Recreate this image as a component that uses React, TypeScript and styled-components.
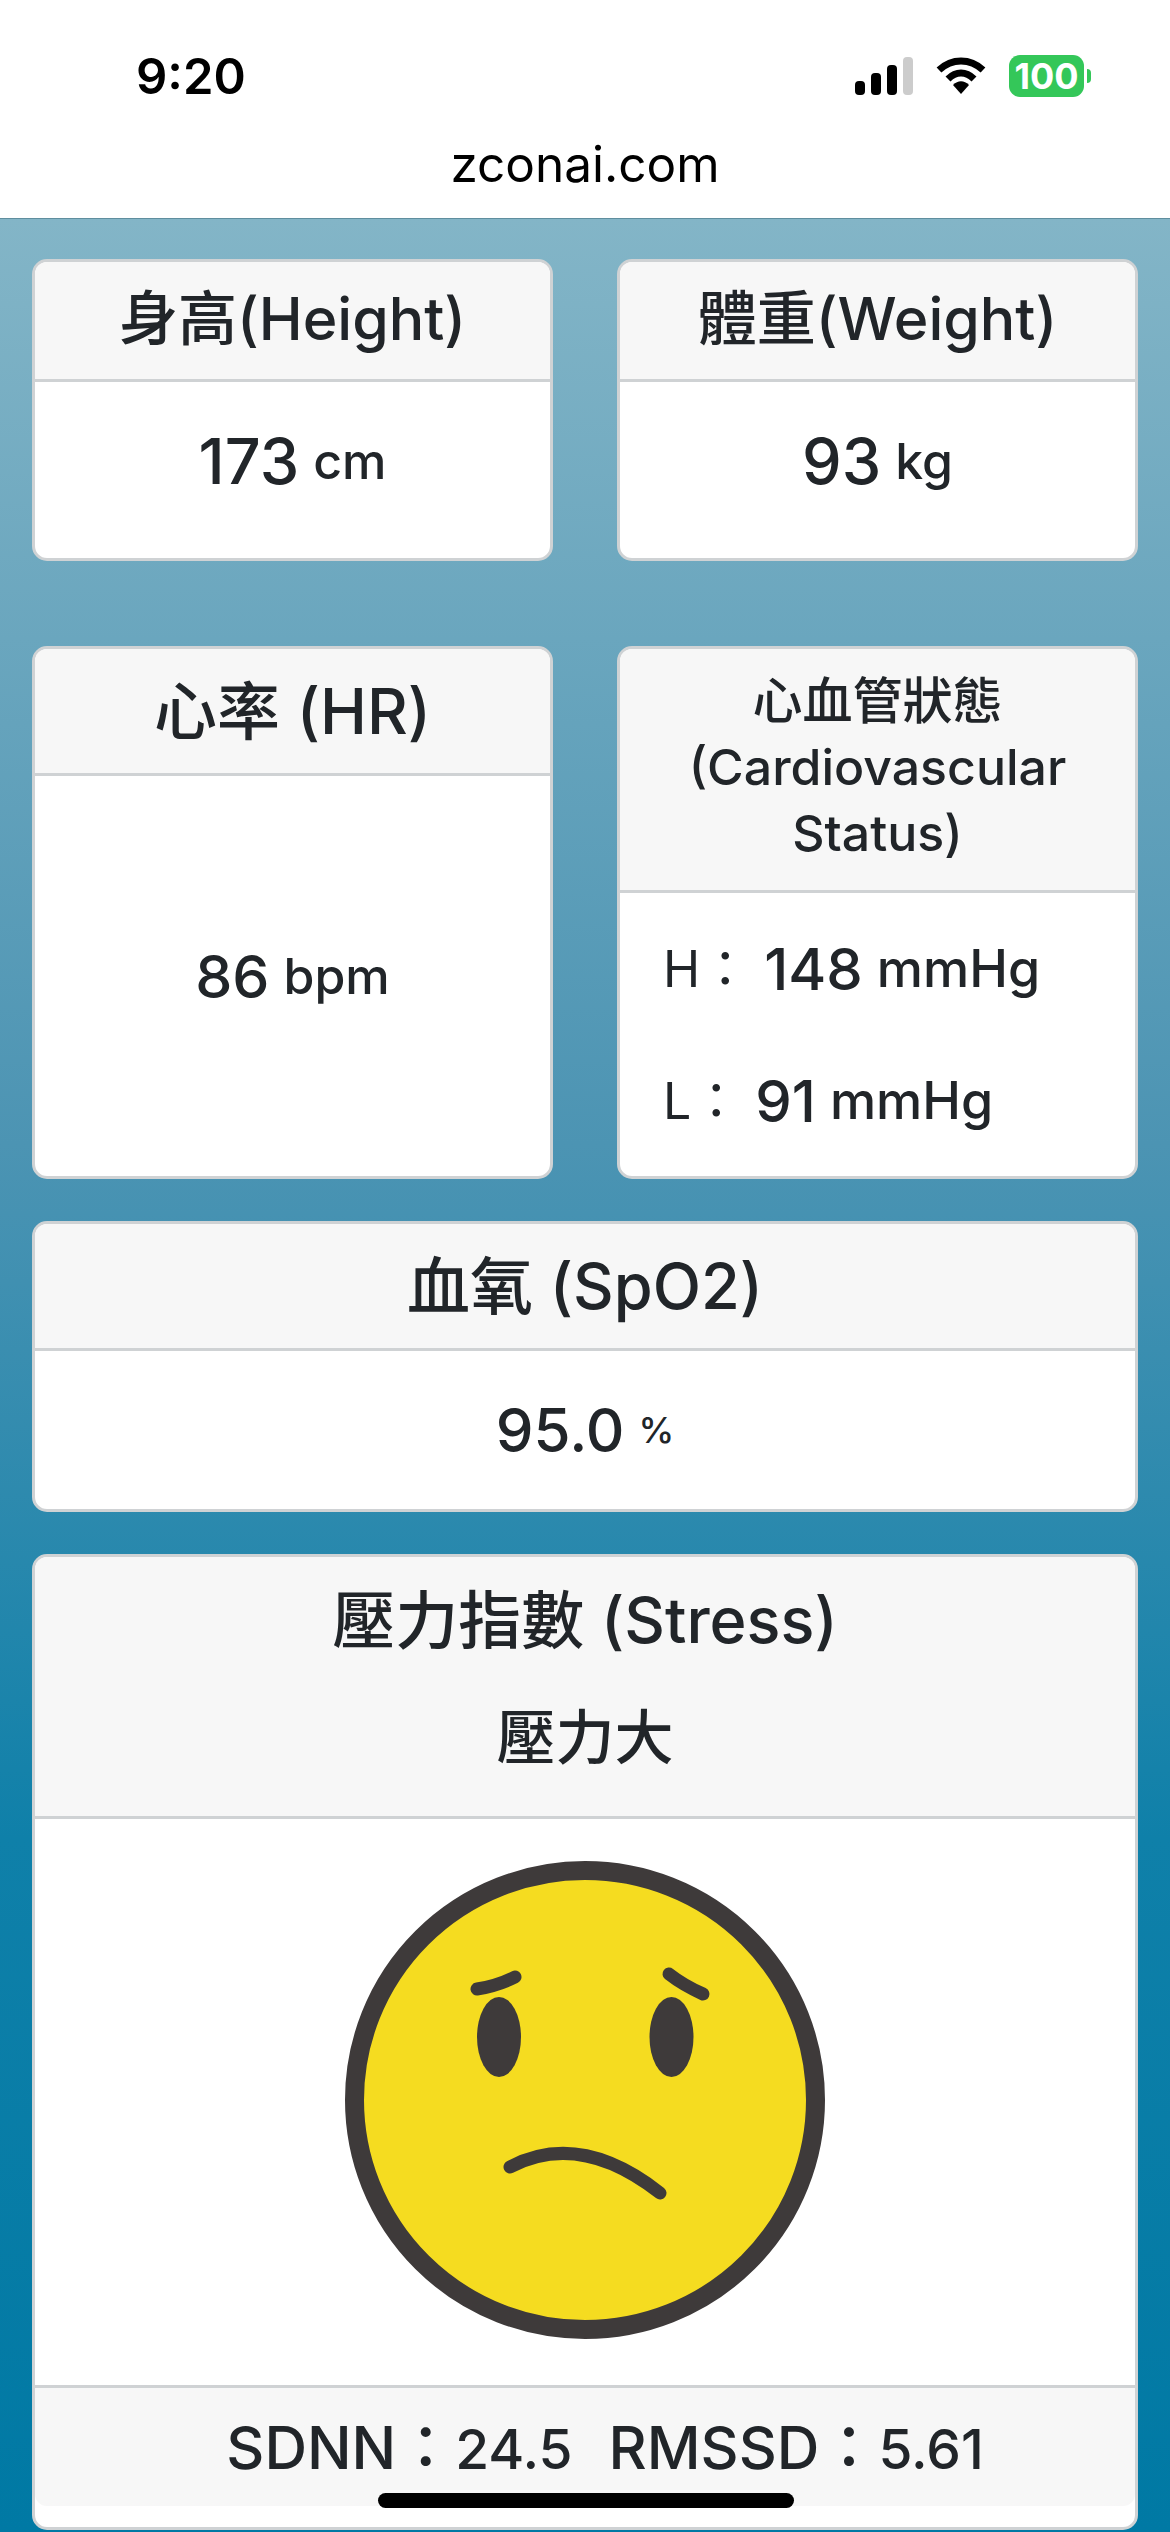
import styled, { createGlobalStyle } from 'styled-components';

const GlobalStyle = createGlobalStyle`
  html, body {
    margin: 0;
    padding: 0;
    background: #fff;
  }
  * {
    box-sizing: border-box;
  }
`;

const fontStack = `Inter, "Noto Sans CJK TC", "Noto Sans", sans-serif`;

const Screen = styled.div`
  position: relative;
  width: 1170px;
  height: 2532px;
  overflow: hidden;
  font-family: ${fontStack};
  color: #212529;
`;

const TopBar = styled.header`
  height: 218px;
  background: #fff;
  color: #000;
  display: flex;
  flex-direction: column;
`;

const StatusBar = styled.div`
  height: 126px;
  padding: 26px 86px 0 136px;
  display: flex;
  justify-content: space-between;
  align-items: center;
`;

const Clock = styled.span`
  font-size: 49px;
  font-weight: 600;
`;

const StatusIcons = styled.div`
  display: flex;
  align-items: center;
  gap: 22px;
`;

const Battery = styled.span`
  width: 75px;
  height: 42px;
  border-radius: 11px;
  background: #34c759;
  color: #fff;
  font-size: 36px;
  font-weight: 700;
  display: flex;
  align-items: center;
  justify-content: center;
  position: relative;

  &::after {
    content: '';
    position: absolute;
    right: -7px;
    top: 14px;
    width: 4px;
    height: 14px;
    border-radius: 0 4px 4px 0;
    background: #34c759;
  }
`;

const Address = styled.div`
  text-align: center;
  font-size: 49.5px;
  line-height: 62px;
  margin-top: 7px;
`;

const Page = styled.main`
  height: 2314px;
  padding: 40px 32px 0;
  border-top: 1px solid #5f8e9e;
  background: linear-gradient(to bottom, #83b5c7 0%, #4c94b3 40%, #0f80a9 70%, #0079a4 100%);
`;

const Row = styled.div<{ $gap: number }>`
  display: flex;
  gap: 64px;
  margin-bottom: ${props => props.$gap}px;
`;

const Card = styled.section<{ $height: number }>`
  flex: 1;
  min-width: 0;
  height: ${props => props.$height}px;
  background: #fff;
  border: 3px solid #cfd2d4;
  border-radius: 15px;
  overflow: hidden;
  display: flex;
  flex-direction: column;
`;

const CardHeader = styled.div<{ $height: number; $lift?: number }>`
  height: ${props => props.$height}px;
  flex-shrink: 0;
  padding-bottom: ${props => props.$lift ?? 0}px;
  background: #f7f7f7;
  border-bottom: 3px solid #cfd2d4;
  display: flex;
  flex-direction: column;
  align-items: center;
  justify-content: center;
  text-align: center;
`;

const Title = styled.h2<{ $size?: number }>`
  margin: 0;
  font-size: ${props => props.$size ?? 63}px;
  line-height: 68px;
  font-weight: 500;
`;

const StatusText = styled.div`
  margin-top: 50px;
  font-size: 59px;
  line-height: 68px;
  font-weight: 500;
`;

const SmallTitle = styled.h2`
  margin: 0;
  font-size: 50px;
  line-height: 66px;
  font-weight: 500;
`;

const CardBody = styled.div<{ $lift?: number }>`
  flex: 1;
  padding-bottom: ${props => props.$lift ?? 0}px;
  display: flex;
  align-items: center;
  justify-content: center;
`;

const Value = styled.span<{ $size?: number }>`
  font-size: ${props => props.$size ?? 59}px;
  font-weight: 500;
`;

const Unit = styled.span<{ $size?: number }>`
  font-size: ${props => props.$size ?? 50}px;
  font-weight: 500;
  margin-left: 14px;
`;

const PressureBody = styled.div`
  flex: 1;
  padding: 0 0 0 43px;
  display: flex;
  flex-direction: column;
  justify-content: center;
  gap: 62px;
`;

const PressureRow = styled.div`
  display: flex;
  align-items: center;
  height: 70px;
`;

const PressureLabel = styled.span`
  font-size: 50px;
  font-weight: 400;
  margin-right: 14px;
  transform: translateY(-4px);
`;

const FaceBody = styled.div`
  height: 566px;
  padding-bottom: 5px;
  display: flex;
  align-items: center;
  justify-content: center;
`;

const CardFooter = styled.div`
  height: 121px;
  background: #f7f7f7;
  border-top: 3px solid #cfd2d4;
  border-radius: 0 0 12px 12px;
  display: flex;
  align-items: baseline;
  justify-content: center;
  padding: 26px 0 0 40px;
  font-size: 59px;
  line-height: 68px;
  font-weight: 500;
`;

const Metric = styled.span`
  margin: 0 18px;
`;

const MetricValue = styled.span`
  font-size: 55px;
`;

const HomeIndicator = styled.div`
  position: absolute;
  left: 378px;
  top: 2493px;
  width: 416px;
  height: 15px;
  border-radius: 8px;
  background: #000;
`;

const SignalIcon = () => (
  <svg width="58" height="38" viewBox="0 0 58 38">
    <rect x="0" y="24" width="10" height="14" rx="4" fill="#000" />
    <rect x="16" y="16" width="10" height="22" rx="4" fill="#000" />
    <rect x="32" y="8" width="10" height="30" rx="4" fill="#000" />
    <rect x="48" y="0" width="10" height="38" rx="4" fill="#ccc" />
  </svg>
);

const WifiIcon = () => (
  <svg width="52" height="38" viewBox="0 0 50 38">
    <path d="M3 13 C16 1 34 1 47 13" fill="none" stroke="#000" strokeWidth="7" strokeLinecap="butt" />
    <path d="M12 22 C20 14 30 14 38 22" fill="none" stroke="#000" strokeWidth="7" strokeLinecap="butt" />
    <path d="M17 28 C22 23 28 23 33 28 L25 37 Z" fill="#000" />
  </svg>
);

const SadFace = () => (
  <svg width="480" height="478" viewBox="0 0 480 478">
    <ellipse cx="240" cy="239" rx="230.5" ry="229.5" fill="#f5dc20" stroke="#3e3a3a" strokeWidth="19" />
    <ellipse cx="154" cy="176" rx="22" ry="40" fill="#3e3a3a" />
    <ellipse cx="326.5" cy="176" rx="22" ry="40" fill="#3e3a3a" />
    <g fill="none" stroke="#3e3a3a" strokeWidth="13" strokeLinecap="round">
      <path d="M132 128 Q152 125 170 116" />
      <path d="M324 113 Q338 124 358 133" />
      <path d="M165 306 C205 285 255 285 315 332" />
    </g>
  </svg>
);

const App = () => {
  return (
    <Screen>
      <GlobalStyle />
      <TopBar>
        <StatusBar>
          <Clock>9:20</Clock>
          <StatusIcons>
            <SignalIcon />
            <WifiIcon />
            <Battery>100</Battery>
          </StatusIcons>
        </StatusBar>
        <Address>zconai.com</Address>
      </TopBar>
      <Page>
        <Row $gap={85}>
          <Card $height={302}>
            <CardHeader $height={120} $lift={4}>
              <Title $size={59}>身高(Height)</Title>
            </CardHeader>
            <CardBody $lift={18}>
              <Value $size={63}>173</Value>
              <Unit>cm</Unit>
            </CardBody>
          </Card>
          <Card $height={302}>
            <CardHeader $height={120} $lift={4}>
              <Title $size={59}>體重(Weight)</Title>
            </CardHeader>
            <CardBody $lift={18}>
              <Value $size={63}>93</Value>
              <Unit>kg</Unit>
            </CardBody>
          </Card>
        </Row>
        <Row $gap={42}>
          <Card $height={533}>
            <CardHeader $height={127}>
              <Title>心率 (HR)</Title>
            </CardHeader>
            <CardBody>
              <Value>86</Value>
              <Unit>bpm</Unit>
            </CardBody>
          </Card>
          <Card $height={533}>
            <CardHeader $height={244} $lift={6}>
              <SmallTitle>心血管狀態</SmallTitle>
              <SmallTitle>(Cardiovascular</SmallTitle>
              <SmallTitle>Status)</SmallTitle>
            </CardHeader>
            <PressureBody>
              <PressureRow>
                <PressureLabel>H：</PressureLabel>
                <Value $size={58}>148</Value>
                <Unit $size={52}>mmHg</Unit>
              </PressureRow>
              <PressureRow>
                <PressureLabel>L：</PressureLabel>
                <Value $size={58}>91</Value>
                <Unit $size={52}>mmHg</Unit>
              </PressureRow>
            </PressureBody>
          </Card>
        </Row>
        <Row $gap={42}>
          <Card $height={291}>
            <CardHeader $height={127}>
              <Title>血氧 (SpO2)</Title>
            </CardHeader>
            <CardBody>
              <Value $size={60}>95.0</Value>
              <Unit $size={36}>%</Unit>
            </CardBody>
          </Card>
        </Row>
        <Row $gap={0}>
          <Card $height={976}>
            <CardHeader $height={262} $lift={16}>
              <Title>壓力指數 (Stress)</Title>
              <StatusText>壓力大</StatusText>
            </CardHeader>
            <FaceBody>
              <SadFace />
            </FaceBody>
            <CardFooter>
              <Metric>SDNN：<MetricValue>24.5</MetricValue></Metric>
              <Metric>RMSSD：<MetricValue>5.61</MetricValue></Metric>
            </CardFooter>
          </Card>
        </Row>
      </Page>
      <HomeIndicator />
    </Screen>
  );
};

export default App;
